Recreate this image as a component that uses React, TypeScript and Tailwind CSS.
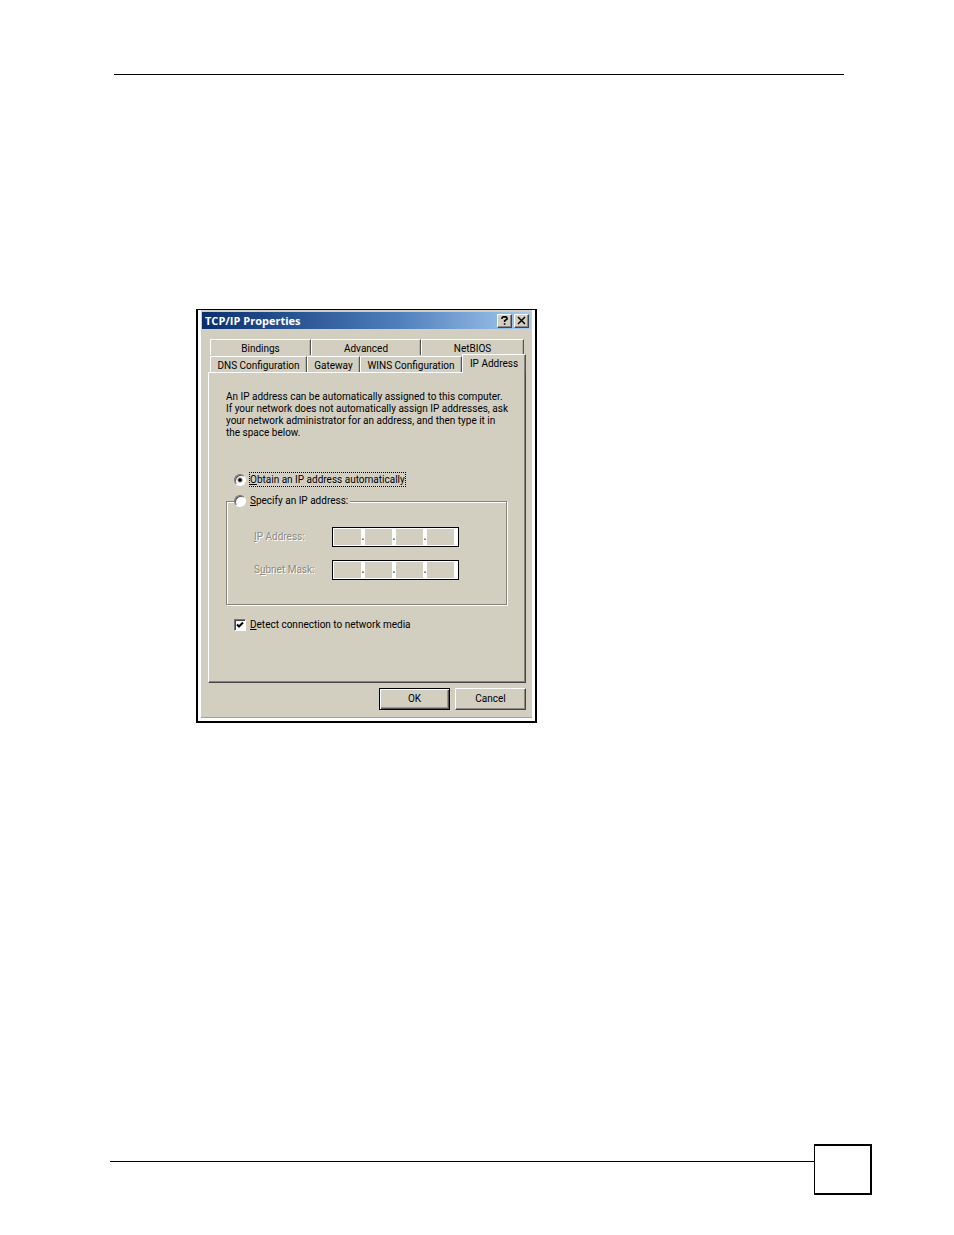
import { useState, type ReactNode } from 'react'
import { clsx } from 'clsx'

interface TabProps {
  active?: boolean
  className?: string
  children: ReactNode
}

function Tab({ active = false, className, children }: TabProps) {
  return (
    <button
      type="button"
      role="tab"
      aria-selected={active}
      className={clsx(
        'flex items-center justify-center whitespace-nowrap border-t border-l border-r border-t-white border-l-white border-r-[#555] bg-[#d2cec0]',
        active
          ? 'relative z-10 h-[19px] -mb-px shadow-[inset_-1px_0_0_#85837b]'
          : 'h-4 pt-[2px] shadow-[inset_-1px_0_0_#b5b2a7]',
        className
      )}
    >
      {children}
    </button>
  )
}

interface IpFieldProps {
  id: string
  label: ReactNode
  name: string
  disabled: boolean
}

function IpField({ id, label, name, disabled }: IpFieldProps) {
  return (
    <div className="flex items-center">
      <label
        htmlFor={`${id}-0`}
        className={clsx('w-[78px] pb-px leading-3', disabled && 'text-[#8c8a82] [text-shadow:1px_1px_0_#fff]')}
      >
        {label}
      </label>
      <div className="flex h-5 items-center border border-black bg-white pl-px pr-1">
        {[0, 1, 2, 3].map((part) => (
          <div key={part} className="flex items-center">
            {part > 0 && <span className="w-1 text-center leading-3 font-bold text-[#555]">.</span>}
            <input
              id={`${id}-${part}`}
              aria-label={part > 0 ? `${name}, part ${part + 1}` : undefined}
              disabled={disabled}
              maxLength={3}
              className="h-4 w-[27px] bg-[#d2cec0] text-center outline-none enabled:bg-white"
            />
          </div>
        ))}
      </div>
    </div>
  )
}

const radioClass =
  'size-3 shrink-0 appearance-none rounded-full border border-t-[#777] border-l-[#777] border-r-white border-b-white bg-white shadow-[inset_1px_1px_0_#555] checked:bg-[radial-gradient(circle,#000_1px,#fff_3px)]'

const captionButtonClass =
  'flex h-[14px] w-[15px] items-center justify-center border border-t-white border-l-white border-r-[#444] border-b-[#444] bg-[#d2cec0] shadow-[inset_-1px_-1px_0_#8c8a82]'

function TcpIpDialog() {
  const [mode, setMode] = useState<'auto' | 'manual'>('auto')
  const manual = mode === 'manual'

  return (
    <section
      aria-label="TCP/IP Properties"
      className="w-full max-w-[341px] border-2 border-t border-black bg-white pb-[3px] pl-[3px] pr-[3px] font-['Roboto','Liberation_Sans',sans-serif] text-[10px] leading-3 text-black"
    >
      <div className="border-b border-[#a5a39a] bg-[#d2cec0] px-px pt-[2px] pb-[7px]">
        {/* Title bar */}
        <header className="flex h-[17px] items-center justify-between bg-linear-to-r from-[#0a2f70] via-[#4f80bb] via-60% to-[#a6caf0] pr-[2px] pl-[3px]">
          <h1 className="font-['Open_Sans',sans-serif] text-[11px] font-bold text-white">TCP/IP Properties</h1>
          <div className="flex gap-[2px]">
            <button type="button" aria-label="Help" className={captionButtonClass}>
              <svg viewBox="0 0 9 9" className="size-[9px]" fill="none" stroke="#000" strokeWidth="1.6">
                <path d="M2 3V1.8L3 .9h3l1 .9v1.4L4.6 4.9v1.2M4.6 7.2v1.6" />
              </svg>
            </button>
            <button type="button" aria-label="Close" className={captionButtonClass}>
              <svg viewBox="0 0 9 9" className="size-[9px]" fill="none" stroke="#000" strokeWidth="1.5">
                <path d="M1 1l7 7M8 1L1 8" />
              </svg>
            </button>
          </div>
        </header>

        {/* Tabs */}
        <div role="tablist" className="mt-[10px] pr-[5px] pl-2">
          <div className="flex pr-[2px]">
            <Tab className="w-[101px]">Bindings</Tab>
            <Tab className="w-[110px]">Advanced</Tab>
            <Tab className="flex-1">NetBIOS</Tab>
          </div>
          <div className="flex h-[17px] items-end">
            <Tab className="w-[97px]">DNS Configuration</Tab>
            <Tab className="w-[53px]">Gateway</Tab>
            <Tab className="w-[102px]">WINS Configuration</Tab>
            <Tab active className="flex-1">IP Address</Tab>
          </div>
        </div>

        <div
          role="tabpanel"
          className="mr-[5px] ml-[6px] h-[311px] border border-t-white border-l-white border-r-[#444] border-b-[#444] pt-[18px] pr-[18px] pl-[17px] shadow-[inset_-1px_-1px_0_#85837b]"
        >
          <p className="whitespace-nowrap">
            An IP address can be automatically assigned to this computer.
            <br />
            If your network does not automatically assign IP addresses, ask
            <br />
            your network administrator for an address, and then type it in
            <br />
            the space below.
          </p>

          <div className="mt-[33px] flex items-center gap-[3px] pl-2">
            <input
              type="radio"
              id="ip-auto"
              name="ip-mode"
              checked={!manual}
              onChange={() => setMode('auto')}
              className={radioClass}
            />
            <label htmlFor="ip-auto" className="border border-dotted border-black pt-px whitespace-nowrap">
              <u>O</u>btain an IP address automatically
            </label>
          </div>

          <fieldset className="mt-[8px] h-[110px] border border-[#85837b] pl-[27px] shadow-[1px_1px_0_#fff,inset_1px_1px_0_#fff]">
            <legend className="-ml-5 flex items-center gap-1 bg-[#d2cec0] pr-[2px]">
              <input
                type="radio"
                id="ip-manual"
                name="ip-mode"
                checked={manual}
                onChange={() => setMode('manual')}
                className={radioClass}
              />
              <label htmlFor="ip-manual">
                <u>S</u>pecify an IP address:
              </label>
            </legend>
            <div className="flex flex-col gap-[13px] pt-5">
              <IpField id="ip-address" name="IP Address" disabled={!manual} label={<><u>I</u>P Address:</>} />
              <IpField id="subnet-mask" name="Subnet Mask" disabled={!manual} label={<>S<u>u</u>bnet Mask:</>} />
            </div>
          </fieldset>

          <div className="mt-[14px] flex items-center gap-1 pl-2">
            <div className="relative size-3">
              <input
                type="checkbox"
                id="detect-media"
                defaultChecked
                className="peer block size-3 appearance-none border border-t-[#777] border-l-[#777] border-r-white border-b-white bg-white shadow-[inset_1px_1px_0_#444]"
              />
              <svg
                viewBox="0 0 12 12"
                className="pointer-events-none absolute inset-0 size-3 opacity-0 peer-checked:opacity-100"
                fill="none"
                stroke="#000"
                strokeWidth="2"
              >
                <path d="M3 5.5l2 2 4-4" />
              </svg>
            </div>
            <label htmlFor="detect-media">
              <u>D</u>etect connection to network media
            </label>
          </div>
        </div>

        <div className="mt-[5px] mr-[5px] flex justify-end gap-[5px]">
          <button
            type="button"
            className="h-[22px] w-[71px] border border-black bg-[#d2cec0] shadow-[inset_1px_1px_0_#fff,inset_-1px_-1px_0_#555,inset_-2px_-2px_0_#9b988e]"
          >
            OK
          </button>
          <button
            type="button"
            className="h-[22px] w-[71px] border border-t-white border-l-white border-r-[#444] border-b-[#444] bg-[#d2cec0] shadow-[inset_-1px_-1px_0_#8c8a82]"
          >
            Cancel
          </button>
        </div>
      </div>
    </section>
  )
}

export default function App() {
  return (
    <div className="flex min-h-screen flex-col bg-white pt-[74px] pb-10">
      <hr className="mr-[110px] ml-[114px] border-t border-black" />

      <main className="mt-[234px] mb-10 pr-4 pl-[196px]">
        <TcpIpDialog />
      </main>

      {/* Page footer with an empty number box */}
      <footer className="mt-auto mr-[82px] ml-[110px] flex">
        <div className="mt-[17px] flex-1 border-t border-black" />
        <div className="h-[51px] w-[58px] border-2 border-l border-black" />
      </footer>
    </div>
  )
}
